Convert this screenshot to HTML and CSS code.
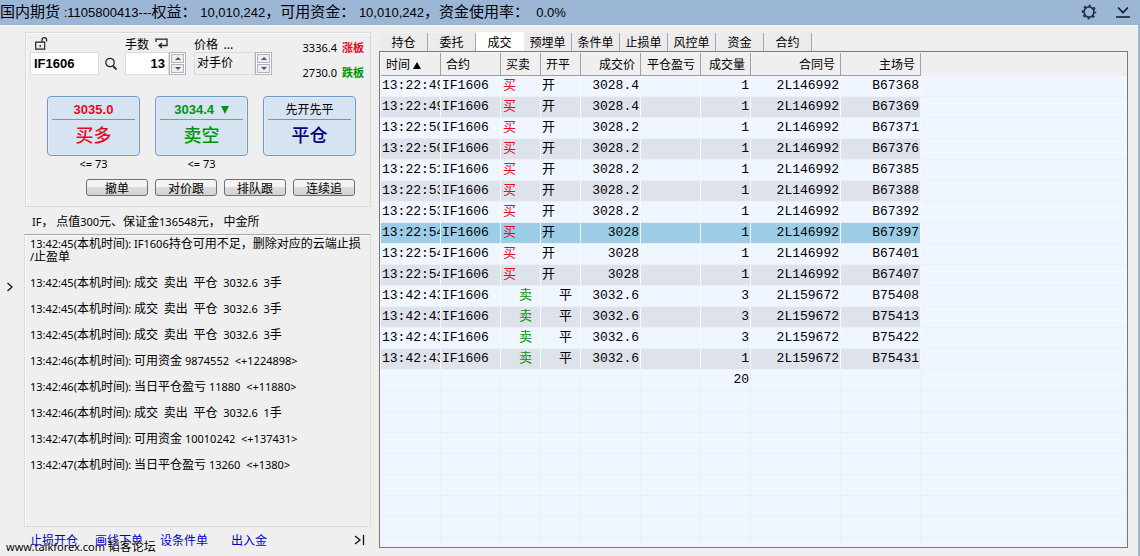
FILE: index.html
```html
<!DOCTYPE html>
<html lang="zh-CN">
<head>
<meta charset="utf-8">
<title>国内期货</title>
<link rel="stylesheet" href="styles.css">
</head>
<body>
<div class="window">
<header class="titlebar">
  <h1 class="title">国内期货<span class="num"> :1105800413---</span>权益：<span class="num"> 10,010,242</span>，可用资金：<span class="num"> 10,010,242</span>，资金使用率：<span class="num">  0.0%</span></h1>
  <button class="icon-btn" aria-label="设置"><svg width="16" height="16" viewBox="0 0 16 16"><circle cx="8" cy="8" r="5" fill="none" stroke="#1c3040" stroke-width="1.700"/><circle cx="8" cy="8" r="6.400" fill="none" stroke="#1c3040" stroke-width="1.800" stroke-dasharray="2.400 2.627" stroke-dashoffset="1.200"/></svg></button>
  <button class="icon-btn" aria-label="收起"><svg width="16" height="16" viewBox="0 0 16 16"><path d="M3 3.500l5 5 5-5M1 13h14" fill="none" stroke="#101820" stroke-width="1.600"/></svg></button>
</header>
<div class="content">
  <div class="rail"><button class="icon-btn" aria-label="展开"><svg width="8" height="10" viewBox="0 0 8 10"><path d="M1.500 1l4.500 4-4.500 4" fill="none" stroke="#111" stroke-width="1.300"/></svg></button></div>
  <aside class="side">
    <section class="order">
      <div class="entry">
        <div class="field">
          <label class="caption" for="symbol" aria-label="合约"><svg width="14" height="13" viewBox="0 0 14 13"><path d="M.7 5.200h9v7h-9zM5.200 8v2.200M7 5V3a2.200 2.200 0 0 1 4.600 0v1.500" fill="none" stroke="#222" stroke-width="1.200"/></svg></label>
          <div class="row"><input class="box strong" id="symbol" value="IF1606"><button class="icon-btn search" aria-label="查找"><svg width="12" height="13" viewBox="0 0 12 13"><circle cx="5" cy="5.500" r="4.200" fill="none" stroke="#222" stroke-width="1.300"/><path d="M8 9l3.500 3.500" stroke="#222" stroke-width="1.800"/></svg></button></div>
        </div>
        <div class="field">
          <label class="caption" for="qty">手数 <svg width="13" height="11" viewBox="0 0 13 11"><path d="M1 4V1.200h11v6.300H4.500M7 5L4 7.500 7 10" fill="none" stroke="#222" stroke-width="1.300"/></svg></label>
          <div class="row"><input class="box strong right" id="qty" value="13"><span class="spin"><button aria-label="增加手数"><svg width="6" height="3" viewBox="0 0 6 3"><path d="M0 3l3-3 3 3z" fill="#456"/></svg></button><button aria-label="减少手数"><svg width="6" height="3" viewBox="0 0 6 3"><path d="M0 0l3 3 3-3z" fill="#456"/></svg></button></span></div>
        </div>
        <div class="field">
          <label class="caption" for="price">价格 &nbsp;...</label>
          <div class="row"><input class="box plain" id="price" value="对手价"><span class="spin"><button aria-label="提高价格"><svg width="6" height="3" viewBox="0 0 6 3"><path d="M0 3l3-3 3 3z" fill="#456"/></svg></button><button aria-label="降低价格"><svg width="6" height="3" viewBox="0 0 6 3"><path d="M0 0l3 3 3-3z" fill="#456"/></svg></button></span></div>
        </div>
        <div class="limits">
          <p>3336.4<b class="up">涨板</b></p>
          <p>2730.0<b class="down">跌板</b></p>
        </div>
      </div>
      <div class="trades">
        <div class="trade"><button class="big up"><span class="quote">3035.0</span><span class="act">买多</span></button><p>&lt;= 73</p></div>
        <div class="trade"><button class="big down"><span class="quote">3034.4 <svg class="arrow" width="8" height="8" viewBox="0 0 8 8"><path d="M0 0h8L4 8z" fill="#00960a"/></svg></span><span class="act">卖空</span></button><p>&lt;= 73</p></div>
        <div class="trade"><button class="big flat"><span class="quote mode">先开先平</span><span class="act">平仓</span></button></div>
      </div>
      <div class="minor"><button>撤单</button><button>对价跟</button><button>排队跟</button><button>连续追</button></div>
    </section>
    <p class="info"><i>IF</i>， 点值<i>300</i>元、保证金<i>136548</i>元， 中金所</p>
    <section class="log">
      <p><i>13:42:45(</i>本机时间<i>): IF1606</i>持仓可用不足，删除对应的云端止损<br><i>/</i>止盈单</p>
      <p><i>13:42:45(</i>本机时间<i>): </i>成交<i>&nbsp; </i>卖出<i>&nbsp; </i>平仓<i>&nbsp; 3032.6&nbsp; 3</i>手</p>
      <p><i>13:42:45(</i>本机时间<i>): </i>成交<i>&nbsp; </i>卖出<i>&nbsp; </i>平仓<i>&nbsp; 3032.6&nbsp; 3</i>手</p>
      <p><i>13:42:45(</i>本机时间<i>): </i>成交<i>&nbsp; </i>卖出<i>&nbsp; </i>平仓<i>&nbsp; 3032.6&nbsp; 3</i>手</p>
      <p><i>13:42:46(</i>本机时间<i>): </i>可用资金<i> 9874552&nbsp; &lt;+1224898&gt;</i></p>
      <p><i>13:42:46(</i>本机时间<i>): </i>当日平仓盈亏<i> 11880&nbsp; &lt;+11880&gt;</i></p>
      <p><i>13:42:46(</i>本机时间<i>): </i>成交<i>&nbsp; </i>卖出<i>&nbsp; </i>平仓<i>&nbsp; 3032.6&nbsp; 1</i>手</p>
      <p><i>13:42:47(</i>本机时间<i>): </i>可用资金<i> 10010242&nbsp; &lt;+137431&gt;</i></p>
      <p><i>13:42:47(</i>本机时间<i>): </i>当日平仓盈亏<i> 13260&nbsp; &lt;+1380&gt;</i></p>
    </section>
    <nav class="links"><a href="#">止损开仓</a><a href="#">画线下单</a><a href="#">设条件单</a><a href="#">出入金</a><button class="icon-btn end" aria-label="收起侧栏"><svg width="11" height="10" viewBox="0 0 11 10"><path d="M1 1l5 4-5 4M9.500 0v10" fill="none" stroke="#111" stroke-width="1.300"/></svg></button></nav>
  </aside>
  <main class="main">
    <div class="tabs" role="tablist"><button role="tab">持仓</button><button role="tab">委托</button><button role="tab" class="active" aria-selected="true">成交</button><button role="tab">预埋单</button><button role="tab">条件单</button><button role="tab">止损单</button><button role="tab">风控单</button><button role="tab">资金</button><button role="tab">合约</button></div>
    <div class="panel">
      <table>
        <colgroup><col class="w60"><col class="w60"><col class="w40"><col class="w40"><col class="w60"><col class="w60"><col class="w50"><col class="w90"><col class="w80"><col></colgroup>
        <thead><tr><th>时间 <svg width="8" height="7" viewBox="0 0 8 7"><path d="M0 7h8L4 0z"/></svg></th><th>合约</th><th>买卖</th><th>开平</th><th class="r">成交价</th><th class="r">平仓盈亏</th><th class="r">成交量</th><th class="r">合同号</th><th class="r">主场号</th><th class="rest"></th></tr></thead>
        <tbody>
          <tr><td>13:22:49</td><td>IF1606</td><td class="buy">买</td><td>开</td><td class="r">3028.4</td><td></td><td class="r">1</td><td class="r">2L146992</td><td class="r">B67368</td><td></td></tr>
          <tr class="alt"><td>13:22:49</td><td>IF1606</td><td class="buy">买</td><td>开</td><td class="r">3028.4</td><td></td><td class="r">1</td><td class="r">2L146992</td><td class="r">B67369</td><td></td></tr>
          <tr><td>13:22:50</td><td>IF1606</td><td class="buy">买</td><td>开</td><td class="r">3028.2</td><td></td><td class="r">1</td><td class="r">2L146992</td><td class="r">B67371</td><td></td></tr>
          <tr class="alt"><td>13:22:50</td><td>IF1606</td><td class="buy">买</td><td>开</td><td class="r">3028.2</td><td></td><td class="r">1</td><td class="r">2L146992</td><td class="r">B67376</td><td></td></tr>
          <tr><td>13:22:51</td><td>IF1606</td><td class="buy">买</td><td>开</td><td class="r">3028.2</td><td></td><td class="r">1</td><td class="r">2L146992</td><td class="r">B67385</td><td></td></tr>
          <tr class="alt"><td>13:22:53</td><td>IF1606</td><td class="buy">买</td><td>开</td><td class="r">3028.2</td><td></td><td class="r">1</td><td class="r">2L146992</td><td class="r">B67388</td><td></td></tr>
          <tr><td>13:22:53</td><td>IF1606</td><td class="buy">买</td><td>开</td><td class="r">3028.2</td><td></td><td class="r">1</td><td class="r">2L146992</td><td class="r">B67392</td><td></td></tr>
          <tr class="selected"><td>13:22:54</td><td>IF1606</td><td class="buy">买</td><td>开</td><td class="r">3028</td><td></td><td class="r">1</td><td class="r">2L146992</td><td class="r">B67397</td><td></td></tr>
          <tr><td>13:22:54</td><td>IF1606</td><td class="buy">买</td><td>开</td><td class="r">3028</td><td></td><td class="r">1</td><td class="r">2L146992</td><td class="r">B67401</td><td></td></tr>
          <tr class="alt"><td>13:22:54</td><td>IF1606</td><td class="buy">买</td><td>开</td><td class="r">3028</td><td></td><td class="r">1</td><td class="r">2L146992</td><td class="r">B67407</td><td></td></tr>
          <tr><td>13:42:43</td><td>IF1606</td><td class="sell">卖</td><td class="close">平</td><td class="r">3032.6</td><td></td><td class="r">3</td><td class="r">2L159672</td><td class="r">B75408</td><td></td></tr>
          <tr class="alt"><td>13:42:43</td><td>IF1606</td><td class="sell">卖</td><td class="close">平</td><td class="r">3032.6</td><td></td><td class="r">3</td><td class="r">2L159672</td><td class="r">B75413</td><td></td></tr>
          <tr><td>13:42:43</td><td>IF1606</td><td class="sell">卖</td><td class="close">平</td><td class="r">3032.6</td><td></td><td class="r">3</td><td class="r">2L159672</td><td class="r">B75422</td><td></td></tr>
          <tr class="alt"><td>13:42:43</td><td>IF1606</td><td class="sell">卖</td><td class="close">平</td><td class="r">3032.6</td><td></td><td class="r">1</td><td class="r">2L159672</td><td class="r">B75431</td><td></td></tr>
          <tr class="blank"><td></td><td></td><td></td><td></td><td></td><td></td><td class="r">20</td><td></td><td></td><td></td></tr>
          <tr class="blank"><td></td><td></td><td></td><td></td><td></td><td></td><td></td><td></td><td></td><td></td></tr>
          <tr class="blank"><td></td><td></td><td></td><td></td><td></td><td></td><td></td><td></td><td></td><td></td></tr>
          <tr class="blank"><td></td><td></td><td></td><td></td><td></td><td></td><td></td><td></td><td></td><td></td></tr>
          <tr class="blank"><td></td><td></td><td></td><td></td><td></td><td></td><td></td><td></td><td></td><td></td></tr>
          <tr class="blank"><td></td><td></td><td></td><td></td><td></td><td></td><td></td><td></td><td></td><td></td></tr>
          <tr class="blank"><td></td><td></td><td></td><td></td><td></td><td></td><td></td><td></td><td></td><td></td></tr>
          <tr class="blank"><td></td><td></td><td></td><td></td><td></td><td></td><td></td><td></td><td></td><td></td></tr>
          <tr class="blank"><td></td><td></td><td></td><td></td><td></td><td></td><td></td><td></td><td></td><td></td></tr>
        </tbody>
      </table>
    </div>
  </main>
</div>
<div class="watermark"><i>www.talkforex.com</i> 韬客论坛</div>
</div>
</body>
</html>
```
FILE: styles.css
```css
* { box-sizing: border-box; }
body {
  margin: 0;
  background: #efefef;
  color: #000;
  font: 12px/14px "Noto Sans CJK SC", sans-serif;
}
p { margin: 0; }
i { font: 11px/11px "Noto Sans", sans-serif; }
button, input { font: inherit; color: inherit; margin: 0; padding: 0; border: 0; background: none; }
svg { flex: none; }
.window { height: 100vh; display: flex; flex-direction: column; position: relative; overflow: hidden; }

.titlebar {
  flex: none;
  height: 25px;
  padding: 0 9px 2px 0;
  display: flex;
  align-items: center;
  gap: 18px;
  background: #9cb7d5;
}
.title { flex: 1; margin: 0; font-size: 15px; line-height: 22px; font-weight: 400; white-space: pre; }
.num { font: 13px/22px "Liberation Sans", sans-serif; }
.icon-btn { display: flex; align-items: center; justify-content: center; }

.content {
  flex: 1;
  min-height: 0;
  display: flex;
  border-right: 2px solid #9fb6cf;
  box-shadow: inset 0 1px #f6f8fa;
}
.rail { flex: none; width: 24px; padding: 0 4px 8px 0; display: flex; align-items: center; justify-content: center; }
.side { flex: none; width: 347px; padding-top: 7px; display: flex; flex-direction: column; }

.order {
  height: 175px;
  padding: 2px 6px 0 4px;
  margin-left: 1px;
  border: 1px solid #dadada;
  box-shadow: inset 1px 1px #fafafa;
}
.entry { display: flex; gap: 8px; }
.field { flex: none; width: 61px; }
.field:first-child { width: 87px; }
.field:nth-child(3) { width: 78px; }
.caption { height: 17px; display: flex; align-items: center; gap: 6px; }
.field:first-child .caption { padding-left: 5px; }
.row { display: flex; height: 23px; }
.box { flex: 1; min-width: 0; padding: 0 3px; background: #fff; border: 1px solid #dcdcdc; }
.strong { font: bold 13px/20px "Liberation Sans", sans-serif; }
.right { text-align: right; }
.plain { background: #efefef; padding: 0 2px 4px; }
.search { flex: none; width: 18px; padding-left: 6px; }
.spin { flex: none; width: 17px; display: flex; flex-direction: column; border: 1px solid #b4b4b4; padding: 1px; gap: 1px; background: #fff; }
.spin button { flex: 1; display: flex; align-items: center; justify-content: center; border: 1px solid #b0b4bc; background: #ececf2; }
.limits { flex: 1; padding-top: 6px; display: flex; flex-direction: column; gap: 11px; }
.limits p { display: flex; justify-content: flex-end; gap: 5px; font: 11px/14px "Noto Sans", "Noto Sans CJK SC", sans-serif; }
.up { color: #e60a1e; }
.down { color: #00960a; }
.flat { color: #00007d; }

.trades { display: flex; gap: 15px; margin: 16px 0 0 17px; }
.trade { width: 93px; text-align: center; }
.trade p { font: 11px/14px "Noto Sans", sans-serif; padding-top: 1px; }
.big {
  width: 100%;
  height: 60px;
  padding: 0 4px;
  display: flex;
  flex-direction: column;
  border: 1px solid #6f9ac8;
  border-radius: 4px;
  background: #d6e3f1;
  box-shadow: inset 0 0 0 1px #dcecfa;
}
.quote { width: 100%; height: 23px; padding-top: 3px; border-bottom: 1px solid #8a9298; font: bold 13px/20px "Liberation Sans", sans-serif; }
.arrow { margin-left: 3px; }
.mode { font: 12px/18px "Noto Sans CJK SC", sans-serif; color: #000; }
.act { width: 100%; padding-top: 1px; font-size: 18px; line-height: 26px; font-weight: 500; }
.minor { display: flex; justify-content: flex-end; gap: 7px; padding: 8px 9px 0 0; }
.minor button { width: 62px; height: 17px; line-height: 14px; border: 1px solid #707070; border-radius: 3px; background: linear-gradient(#f4f4f4 45%, #dcdcdc 50%, #d2d2d2); }

.info { padding: 7px 0 6px 8px; height: 27px; }
.log {
  flex: 1;
  min-height: 0;
  padding: 1px 4px 0 5px;
  border: 1px solid #dcdcdc;
  border-top-color: #a8a8a8;
  box-shadow: inset 1px 1px #fafafa;
  line-height: 13px;
}
.log p { margin-bottom: 13px; }
.links { flex: none; height: 29px; padding: 0 6px 3px; display: flex; align-items: center; gap: 17px; }
.links a { color: #0000c8; text-decoration: none; }
.links a:nth-child(4) { margin-left: 6px; }
.end { margin-left: auto; }

.main { flex: 1; min-width: 0; display: flex; flex-direction: column; padding: 7px 10px 8px 8px; }
.tabs { display: flex; height: 19px; padding-left: 1px; align-items: stretch; }
.tabs button { width: 48px; margin-top: 1px; line-height: 16px; border-right: 1px solid #a6a6a6; background: #ebebeb; }
.tabs .active { margin-top: 0; background: #fff; border-color: #fff; }
.panel { flex: 1; min-height: 0; overflow: hidden; border: 1px solid #787878; background: #f0f6ff; padding: 1px; }
table { width: 100%; border-collapse: separate; border-spacing: 0; table-layout: fixed; }
.w40 { width: 40px; }
.w50 { width: 50px; }
.w60 { width: 60px; }
.w80 { width: 80px; }
.w90 { width: 90px; }
th { height: 23px; padding: 0 5px; font-weight: 400; text-align: left; white-space: nowrap; background: #efefef; border-right: 1px solid #a0a0a0; border-bottom: 1px solid #a0a0a0; }
th.rest { border-color: #efefef; }
td { height: 21px; padding: 0 1px; font: 13px/18px "Liberation Mono", "Noto Sans CJK SC", monospace; white-space: nowrap; overflow: hidden; border-right: 1px solid #f6faff; border-bottom: 1px solid #eaf0fa; }
.r { text-align: right; }
.alt td:not(:last-child) { background: #dee2ea; }
.selected td:not(:last-child) { background: #9ccce6; }
.blank td { border-right-color: #eaf0fa; }
td.buy { color: #e60a1e; padding-left: 2px; }
td.sell { color: #00960a; }
td.sell, td.close { text-align: right; padding-right: 8px; }

.watermark { position: absolute; left: 6px; bottom: 3px; line-height: 14px; text-shadow: 0 0 2px #fff; }
```
